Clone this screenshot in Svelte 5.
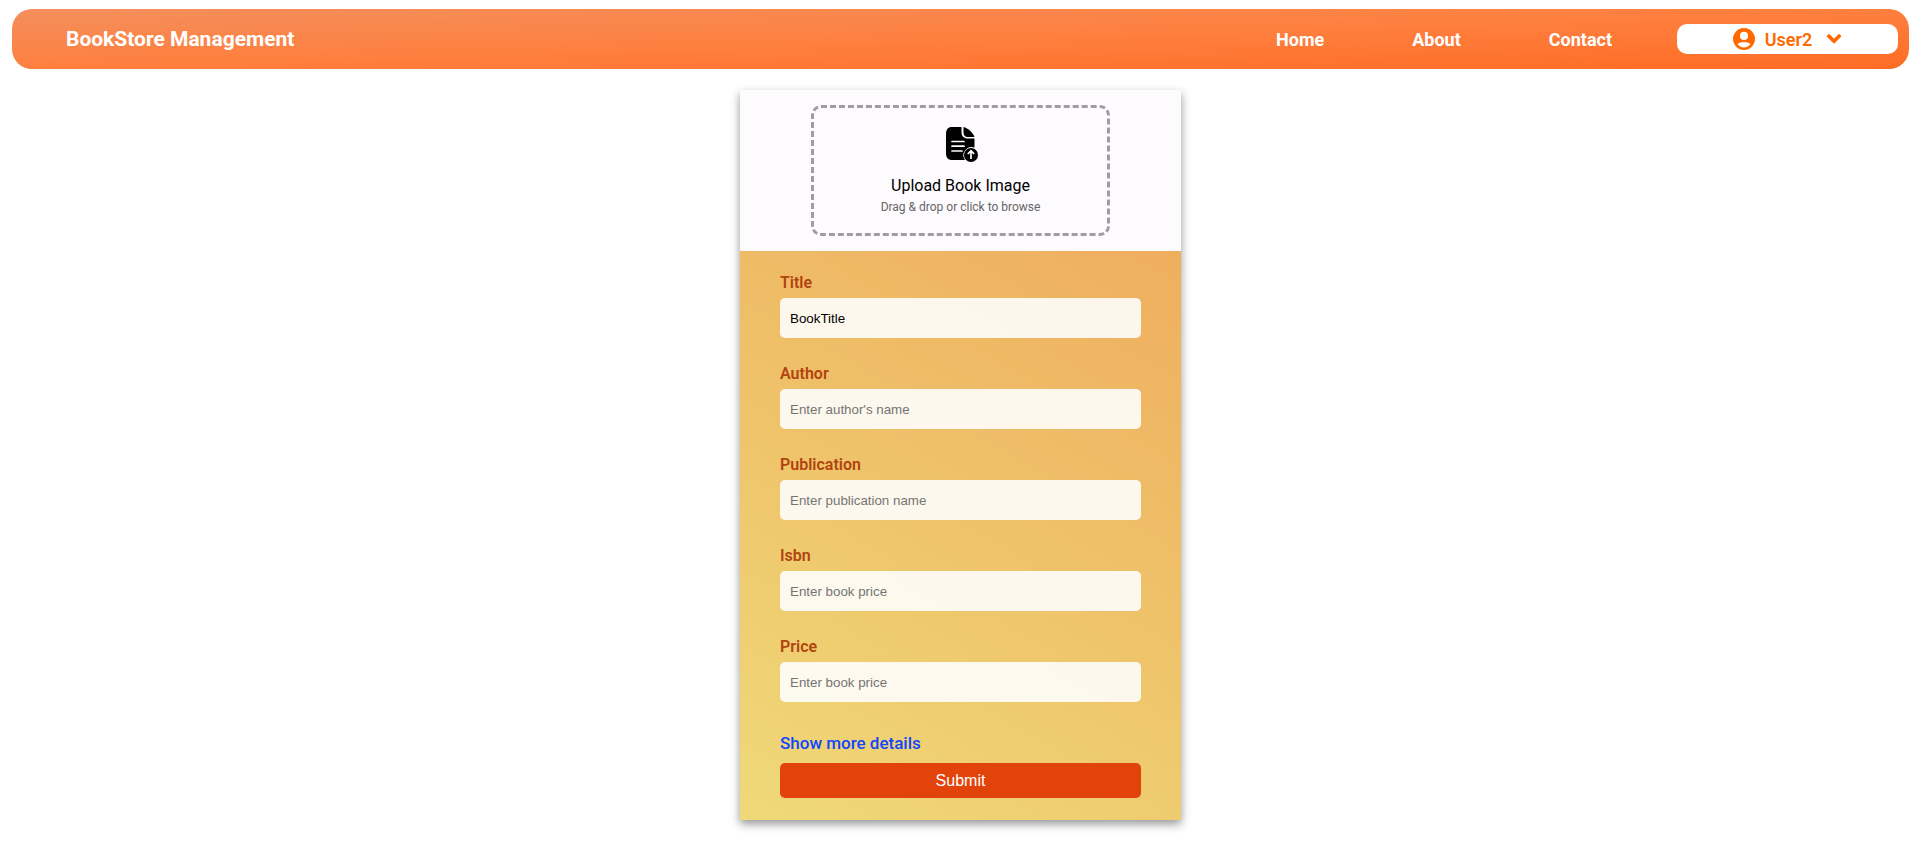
<script>
  const links = ['Home', 'About', 'Contact'];
  const fields = [
    { id: 'title', label: 'Title', placeholder: 'Enter book title', value: 'BookTitle' },
    { id: 'author', label: 'Author', placeholder: "Enter author's name", value: '' },
    { id: 'publication', label: 'Publication', placeholder: 'Enter publication name', value: '' },
    { id: 'isbn', label: 'Isbn', placeholder: 'Enter book price', value: '' },
    { id: 'price', label: 'Price', placeholder: 'Enter book price', value: '' }
  ];
</script>

<div class="page">
  <header>
    <span class="brand">BookStore Management</span>
    <nav>
      {#each links as link}
        <a href="#{link.toLowerCase()}">{link}</a>
      {/each}
    </nav>
    <button class="user" type="button">
      <svg class="avatar" viewBox="0 0 22 22" aria-hidden="true">
        <path fill="currentColor" fill-rule="evenodd" d="M11 0a11 11 0 1 0 0 22 11 11 0 0 0 0-22Zm0 3.8a4 4.1 0 1 1 0 8.2 4 4.1 0 0 1 0-8.2Zm0 15.6c-2.700 0-5-1.200-6.400-3.100 1.300-1.500 3.700-2.300 6.400-2.300s5.100.8 6.400 2.300c-1.400 1.900-3.700 3.100-6.400 3.100Z" />
      </svg>
      <span>User2</span>
      <svg class="chevron" viewBox="0 0 16 10" aria-hidden="true">
        <path d="M3 2.300l5 5 5-5" fill="none" stroke="currentColor" stroke-width="3.600" stroke-linecap="square" />
      </svg>
    </button>
  </header>

  <main>
    <div class="upload-area">
      <button class="dropzone" type="button">
        <svg class="file" viewBox="-2 0 34 36" aria-hidden="true">
          <path d="M6 0h9.500v5c0 4.200 2.300 6.500 6.500 6.500h6.500v9a8.300 8.300 0 0 0-9.600 12.500H6c-4 0-6-2.500-6-7V7c0-4.500 2-7 6-7Z" />
          <path d="M17.500 0C22 1.300 27 5.500 28.500 10h-6.500c-3.200 0-4.500-1.600-4.500-4.800Z" />
          <path d="M6 14.500h12M6 19.200h12M6 24h10" stroke="#fdfbfd" stroke-width="1.700" stroke-linecap="round" />
          <circle cx="25" cy="28" r="7" />
          <path d="M25 32v-8M21.800 27l3.200-3.200 3.200 3.200" fill="none" stroke="#fff" stroke-width="1.700" />
        </svg>
        <span class="upload-title">Upload Book Image</span>
        <span class="upload-hint">Drag &amp; drop or click to browse</span>
      </button>
    </div>

    <form>
      {#each fields as field}
        <div class="field">
          <label for={field.id}>{field.label}</label>
          <input id={field.id} type="text" placeholder={field.placeholder} value={field.value} />
        </div>
      {/each}
      <a class="more" href="#details">Show more details</a>
      <button class="submit" type="submit">Submit</button>
    </form>
  </main>
</div>

<style>
  :global(body) {
    background: #fff;
  }

  .page {
    padding: 9px 5px 26px 12px;
    font-family: Roboto, sans-serif;
  }

  header {
    display: flex;
    align-items: center;
    box-sizing: border-box;
    height: 60px;
    padding: 0 11px 0 54px;
    border-radius: 20px;
    background: linear-gradient(to bottom right, #f38f5c, #ff7f3f, #fd6c24);
    color: #fff;
  }

  .brand {
    font-size: 21px;
    font-weight: 700;
  }

  nav {
    display: flex;
    gap: 88px;
    margin-left: auto;
    margin-right: 65px;
  }

  nav a {
    color: #fff;
    font-size: 18px;
    font-weight: 700;
    text-decoration: none;
  }

  .user {
    display: flex;
    align-items: center;
    justify-content: center;
    gap: 10px;
    width: 221px;
    height: 30px;
    padding: 0;
    border: 0;
    border-radius: 10px;
    background: #fff;
    color: #ff6a00;
    font: 600 18px Roboto, sans-serif;
  }

  .avatar {
    width: 22px;
    height: 22px;
  }

  .chevron {
    width: 16px;
    height: 10px;
    margin-left: 4px;
  }

  main {
    width: 441px;
    max-width: 100%;
    margin: 21px auto 0;
    box-shadow: 0 4px 9px rgba(0, 0, 0, 0.42);
  }

  .upload-area {
    display: flex;
    justify-content: center;
    padding: 15px;
    background: #fdfbfd;
  }

  .dropzone {
    display: flex;
    flex-direction: column;
    align-items: center;
    box-sizing: border-box;
    width: 299px;
    height: 131px;
    padding: 19px 0 0;
    border: 3px dashed #9f9d9f;
    border-radius: 10px;
    background: transparent;
    color: #000;
    font-family: Roboto, sans-serif;
  }

  .file {
    width: 34px;
    height: 36px;
  }

  .upload-title {
    margin-top: 13px;
    font-size: 16px;
    line-height: 20px;
  }

  .upload-hint {
    margin-top: 4px;
    color: #666;
    font-size: 12px;
    line-height: 14px;
  }

  form {
    display: flex;
    flex-direction: column;
    padding: 22px 40px;
    background: linear-gradient(30deg, #efd978, #efae5e);
  }

  .field {
    display: flex;
    flex-direction: column;
    gap: 6px;
    margin-bottom: 26px;
  }

  label {
    color: #b1440e;
    font-size: 16px;
    font-weight: 600;
    line-height: 19px;
  }

  input {
    box-sizing: border-box;
    height: 40px;
    padding: 0 10px;
    border: 0;
    border-radius: 5px;
    background: rgba(255, 255, 255, 0.88);
    color: #000;
    font-family: "Liberation Sans", Arial, sans-serif;
  }

  input::placeholder {
    color: #757575;
  }

  .more {
    align-self: flex-start;
    margin: 5px 0 10px;
    color: #0f46ff;
    font-size: 17px;
    font-weight: 500;
    line-height: 20px;
    text-decoration: none;
  }

  .submit {
    height: 35px;
    padding: 0;
    border: 0;
    border-radius: 5px;
    background: #e2430a;
    color: #fff;
    font: 16px "Liberation Sans", Arial, sans-serif;
  }
</style>
